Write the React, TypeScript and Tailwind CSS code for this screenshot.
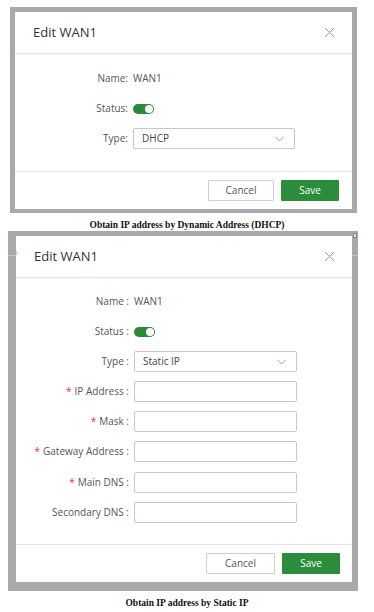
import React from "react";

type Field = { label: string; required?: boolean };

const staticFields: Field[] = [
  { label: "IP Address", required: true },
  { label: "Mask", required: true },
  { label: "Gateway Address", required: true },
  { label: "Main DNS", required: true },
  { label: "Secondary DNS" },
];

function CloseIcon() {
  return (
    <svg width="11" height="11" viewBox="0 0 11 11" className="text-[#9a9a9a]">
      <path d="M1 1 L10 10 M10 1 L1 10" stroke="currentColor" strokeWidth="1" fill="none" />
    </svg>
  );
}

function Chevron() {
  return (
    <svg width="9" height="6" viewBox="0 0 9 6" className="text-[#9a9a9a]">
      <path d="M0.5 0.8 L4.5 5 L8.5 0.8" stroke="currentColor" strokeWidth="0.9" fill="none" />
    </svg>
  );
}

function Row({ label, required, children, spaced }: { label: string; required?: boolean; children: React.ReactNode; spaced?: boolean }) {
  return (
    <div className="flex items-center h-[21px]">
      <div className="w-[118px] text-right text-[10px] text-[#555] pr-[5px] whitespace-nowrap">
        {required && <span className="text-[#d9363e] mr-[3px]">*</span>}
        {label}
        {spaced ? " :" : ":"}
      </div>
      <div className="flex-1 flex items-center">{children}</div>
    </div>
  );
}

function Toggle() {
  return (
    <div className="w-[21px] h-[10px] rounded-full bg-[#2a8a3a] flex items-center justify-end pr-[1px]">
      <div className="w-[8px] h-[8px] rounded-full bg-white" />
    </div>
  );
}

function Select({ value, w }: { value: string; w: string }) {
  return (
    <div className={`${w} h-[21px] border border-[#c8c8c8] rounded-[2px] flex items-center justify-between pl-[8px] pr-[10px] text-[10px] text-[#444]`}>
      <span>{value}</span>
      <Chevron />
    </div>
  );
}

function Footer({ cancelW, pr }: { cancelW: string; pr: string }) {
  return (
    <div className={`border-t border-[#e3e3e3] flex justify-end gap-[7px] pt-[8px] pb-[8px] ${pr}`}>
      <button className={`${cancelW} h-[21px] border border-[#d0d0d0] bg-white text-[10px] text-[#555] rounded-[1px]`}>
        Cancel
      </button>
      <button className="w-[58px] h-[21px] bg-[#2b8c3b] text-white text-[10px] rounded-[1px]">
        Save
      </button>
    </div>
  );
}

function Header() {
  return (
    <div className="h-[42px] border-b border-[#e3e3e3] flex items-center justify-between pl-[18px] pr-[17px]">
      <span className="text-[13px] text-[#333] font-medium">Edit WAN1</span>
      <CloseIcon />
    </div>
  );
}

export default function App() {
  return (
    <div className="w-[374px] h-[612px] bg-white font-['Open_Sans','Liberation_Sans',sans-serif] overflow-hidden pt-[7px]">
      {/* DHCP dialog */}
      <div className="ml-[10px] w-[347px] bg-[#a7a9ac] pt-[5px] pl-[5px] pr-[5px] pb-[4px]">
        <div className="bg-white">
          <Header />
          <div className="pt-[14px] pb-[22px] flex flex-col gap-[9px]">
            <Row label="Name">
              <span className="text-[10px] text-[#555]">WAN1</span>
            </Row>
            <Row label="Status">
              <Toggle />
            </Row>
            <Row label="Type">
              <Select value="DHCP" w="w-[162px]" />
            </Row>
          </div>
          <Footer cancelW="w-[66px]" pr="pr-[13px]" />
        </div>
      </div>
      <p className="text-center text-[9.5px] font-bold text-[#111] font-['Liberation_Serif',serif] mt-[7px] leading-[10px]">
        Obtain IP address by Dynamic Address (DHCP)
      </p>

      {/* Static IP dialog */}
      <div className="relative ml-[8px] mt-[1px] w-[350px] bg-[#a7a9ac] pt-[5px] pl-[8px] pr-[6px] pb-[9px]">
        <div className="absolute left-0 top-[24px] w-[8px] h-[1px] bg-[#c3c4c6]" />
        <span className="absolute left-[6px] top-[19px] text-[6px] leading-[6px] text-[#c79aa4]">B</span>
        <div className="absolute right-0 top-[24px] w-[6px] h-[1px] bg-[#c3c4c6]" />
        <div className="absolute right-[1px] top-[2px] w-[4px] h-[5px] border border-[#888] bg-[#ddd]" />
        <div className="bg-white">
          <Header />
          <div className="pt-[13px] pb-[21px] flex flex-col gap-[9.1px]">
            <Row label="Name" spaced>
              <span className="text-[10px] text-[#555]">WAN1</span>
            </Row>
            <Row label="Status" spaced>
              <Toggle />
            </Row>
            <Row label="Type" spaced>
              <Select value="Static IP" w="w-[163px]" />
            </Row>
            {staticFields.map((f) => (
              <Row key={f.label} label={f.label} required={f.required} spaced>
                <div className="w-[163px] h-[21px] border border-[#c8c8c8] rounded-[2px] bg-white" />
              </Row>
            ))}
          </div>
          <Footer cancelW="w-[69px]" pr="pr-[12px]" />
        </div>
      </div>
      <p className="text-center text-[9.5px] font-bold text-[#111] font-['Liberation_Serif',serif] mt-[7px] leading-[10px]">
        Obtain IP address by Static IP
      </p>
    </div>
  );
}
